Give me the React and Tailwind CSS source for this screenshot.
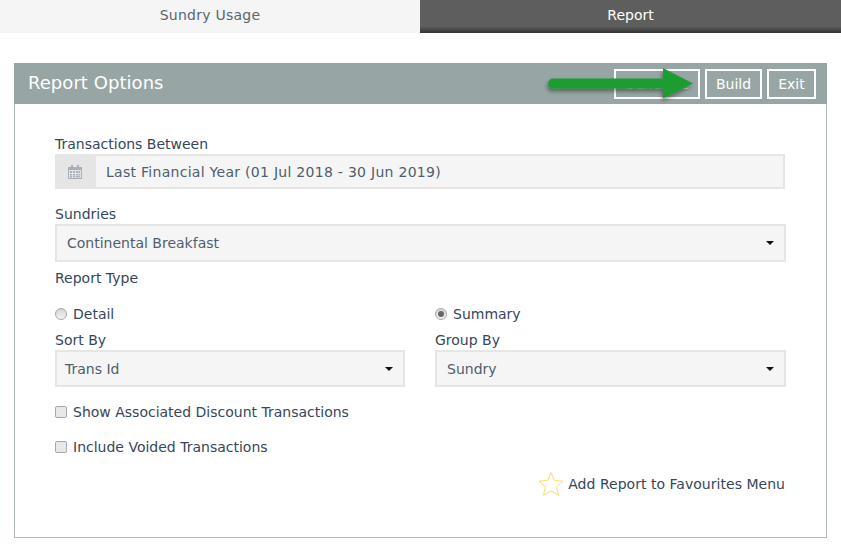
import React from 'react'

const font = { fontFamily: '"DejaVu Sans", Verdana, sans-serif' }

const Caret = () => (
  <svg width="8" height="4" viewBox="0 0 8 4" className="shrink-0">
    <path d="M0 0h8L4 4z" fill="#111" />
  </svg>
)

const SelectBox = ({ value, className }) => (
  <div className={`flex items-center justify-between border-2 border-[#e5e5e5] bg-[#f5f5f5] pr-[10px] text-[#4e5e6e] ${className}`}>
    <span>{value}</span>
    <Caret />
  </div>
)

const Radio = ({ label, checked }) => (
  <div className="flex items-center gap-[6px] h-[20px]">
    <span className="w-[12px] h-[12px] -mt-px rounded-full border border-[#a8a8a8] bg-gradient-to-b from-[#d4d4d4] to-[#f4f4f4] flex items-center justify-center">
      {checked && <span className="w-[6px] h-[6px] rounded-full bg-[#666]"></span>}
    </span>
    <span className="text-[#36465a]">{label}</span>
  </div>
)

const Check = ({ label, className }) => (
  <div className={`flex items-center gap-[6px] h-[20px] ${className}`}>
    <span className="w-[12px] h-[12px] rounded-[2px] border border-[#a8a8a8] bg-[#e8e8e8]"></span>
    <span className="text-[#36465a]">{label}</span>
  </div>
)

const HeaderButton = ({ children, className }) => (
  <div className={`h-[30px] border-2 border-white flex items-center justify-center text-[14px] ${className}`}>
    {children}
  </div>
)

const App = () => {
  return (
    <div className="w-[841px] h-[556px] bg-white overflow-hidden text-[14px] leading-[20px] relative" style={font}>
      <div className="flex h-[33px]">
        <div className="w-[420px] pb-[4px] bg-[#f5f5f5] flex items-center justify-center text-[#5a6673] tracking-[0.25px]">Sundry Usage</div>
        <div className="flex-1 pb-[4px] bg-gradient-to-b from-[#5e5e5e] from-80% to-[#333] flex items-center justify-center text-white">Report</div>
      </div>

      <div className="mt-[30px] ml-[14px] w-[813px] h-[475px] border border-[#b0bcba]">
        <div className="h-[41px] -mt-px -mx-px pb-[2px] bg-[#97a6a4] flex items-center justify-between pl-[14px] pr-[11px]">
          <span className="text-[18px] font-normal text-white tracking-[0.05px]">Report Options</span>
          <div className="flex gap-[5px] mt-[2px]">
            <HeaderButton className="w-[86px] text-[#dfe5e4]">Generate</HeaderButton>
            <HeaderButton className="w-[57px] text-white">Build</HeaderButton>
            <HeaderButton className="w-[49px] text-white">Exit</HeaderButton>
          </div>
        </div>

        <div className="pl-[40px] w-[771px] pt-[30px]">
          <div className="text-[#36465a]">Transactions Between</div>
          <div className="h-[35px] border-2 border-[#e5e5e5] bg-[#f5f5f5] flex items-center text-[#4e5e6e] w-[730px]">
            <div className="w-[41px] h-full pr-[2px] bg-[#e5e5e5] -ml-[2px] flex items-center justify-center">
              <svg width="14" height="14" viewBox="0 0 14 14" fill="#a9aeb8">
                <path d="M3 0h2v2h4V0h2v2h3v12H0V2h3zM1 5v8h12V5z" />
                <path d="M2 6h2v2H2zm3 0h2v2H5zm3 0h2v2H8zm2.500 0h1.500v2h-1.500zM2 9h2v1.500H2zm3 0h2v1.500H5zm3 0h2v1.500H8zm2.500 0h1.500v1.500h-1.500zM2 11h2v1.500H2zm3 0h2v1.500H5zm3 0h2v1.500H8zm2.500 0h1.500v1.500h-1.500z" />
              </svg>
            </div>
            <span className="ml-[10px] tracking-[0.28px]">Last Financial Year (01 Jul 2018 - 30 Jun 2019)</span>
          </div>

          <div className="mt-[15px] text-[#36465a]">Sundries</div>
          <SelectBox value="Continental Breakfast" className="h-[38px] w-[731px] pl-[10px]" />

          <div className="mt-[6px] text-[#36465a]">Report Type</div>

          <div className="mt-[16px] grid grid-cols-[380px_351px]">
            <Radio label="Detail" />
            <Radio label="Summary" checked />
            <div className="mt-[6px] text-[#36465a]">Sort By</div>
            <div className="mt-[6px] text-[#36465a]">Group By</div>
            <SelectBox value="Trans Id" className="h-[37px] w-[350px] pl-[8px]" />
            <SelectBox value="Sundry" className="h-[37px] w-[351px] pl-[10px]" />
          </div>

          <Check label="Show Associated Discount Transactions" className="mt-[15px]" />
          <Check label="Include Voided Transactions" className="mt-[15px]" />

          <div className="mt-[14px] w-[730px] flex items-center justify-end gap-[4px] text-[#36465a]">
            <svg width="26" height="26" viewBox="0 0 26 26" fill="none" stroke="#f5de6e" strokeWidth="1">
              <path d="M13 1.500l3.400 8 8.600.7-6.500 5.600 2 8.400-7.500-4.500-7.500 4.500 2-8.400L1 10.200l8.600-.7z" />
            </svg>
            <span className="tracking-[0.03px]">Add Report to Favourites Menu</span>
          </div>
        </div>
      </div>

      {/* green arrow annotation sits over the header buttons */}
      <svg className="absolute left-[540px] top-[62px]" width="170" height="46" viewBox="0 0 170 46">
        <defs>
          <filter id="sh" x="-10%" y="-30%" width="120%" height="170%">
            <feDropShadow dx="-1" dy="3" stdDeviation="2" floodColor="#000" floodOpacity="0.4" />
          </filter>
        </defs>
        <path d="M13 16.500H123V6L153 21.500 123 36.500V26.500H13a5 5 0 0 1 0-10z" fill="#1c9d33" filter="url(#sh)" />
      </svg>
    </div>
  )
}

export default App
